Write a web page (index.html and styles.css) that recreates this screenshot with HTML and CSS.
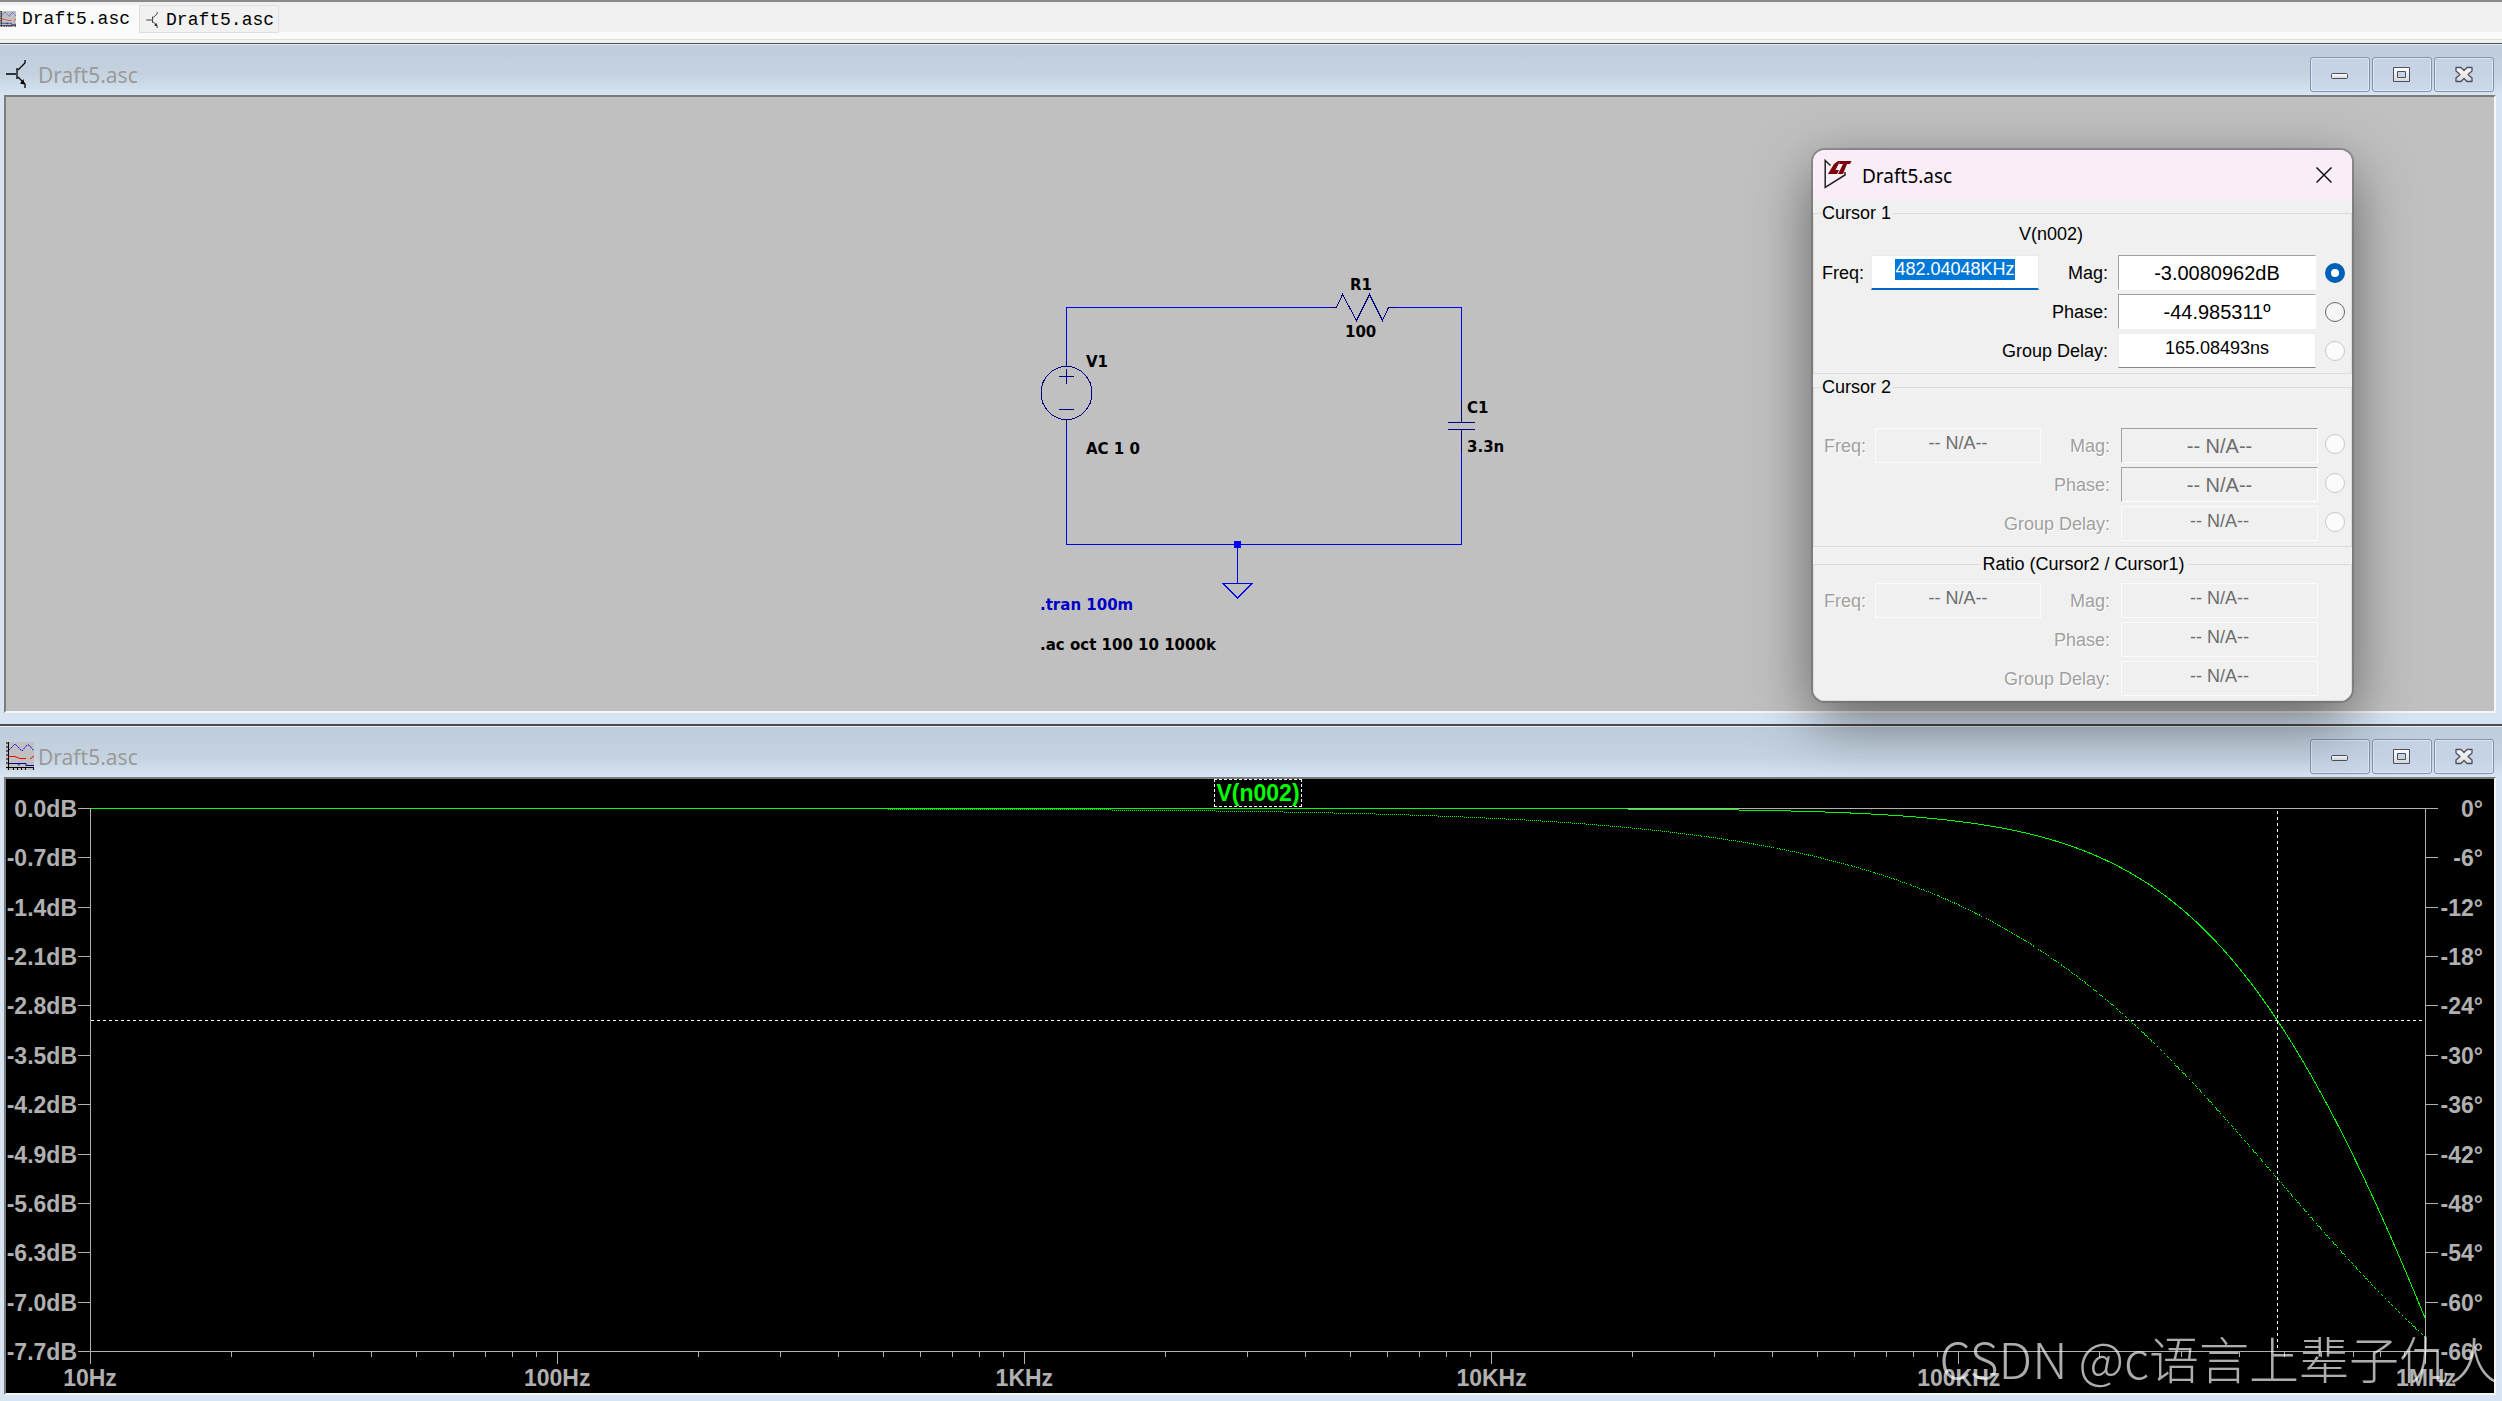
FILE: index.html
```html
<!DOCTYPE html>
<html lang="en">
<head>
<meta charset="utf-8">
<title>Draft5.asc</title>
<link rel="stylesheet" href="styles.css">
</head>
<body>
<svg class="defs" width="0" height="0" aria-hidden="true">
  <defs>
    <linearGradient id="glyph" x1="0" y1="0" x2="0" y2="1"><stop offset="0" stop-color="#fff"/><stop offset="1" stop-color="#d8d8d8"/></linearGradient>
    <symbol id="i-plot" viewBox="0 0 28 28">
      <path d="M0 0h28v28H0z" fill="#c0c0c0"/>
      <path d="M0 1h3M0 5h3M0 9h3M0 13h3M0 17h3M0 21h3M2.5 0v28M0 25.5h28M7.500 25v3M11.500 25v3M15.500 25v3M19.500 25v3M27.500 25v3" fill="none" stroke="#000"/>
      <path d="M3 8l6-6 7 7 5-6h2l5 6" fill="none" stroke="#00f" stroke-dasharray="2 1"/>
      <path d="M3 14.500h6l5 2h6M24 17l4-3" fill="none" stroke="#f00"/>
      <path d="M3 21.500h10v2M12 22.500v-1h8v2h8" fill="none" stroke="#00009a"/>
    </symbol>
    <symbol id="i-bjt" viewBox="0 0 20 28">
      <path d="M0 14h10M11 8v11M12 10l7-7V0M12 17l7 7v4" fill="none" stroke="#000" stroke-width="1.300"/>
      <path d="M18.500 24.500l-4.500-1 3.500-4.500z" fill="#000"/>
    </symbol>
    <symbol id="i-min" viewBox="0 0 18 18"><rect x=".5" y="7.500" width="16" height="5" rx="1" fill="url(#glyph)" stroke="#4b5060"/></symbol>
    <symbol id="i-max" viewBox="0 0 18 18"><path d="M.5 1.500h16v14H.5zM4.500 5.500v6h8v-6z" fill="url(#glyph)" fill-rule="evenodd" stroke="#4b5060"/></symbol>
    <symbol id="i-close" viewBox="0 0 18 18"><path d="M1 1.500h5l3 3 3-3h5v3.500l-4 3.500 4 3.500v3.500h-5l-3-3-3 3H1v-3.500l4-3.500-4-3.500z" fill="url(#glyph)" stroke="#4b5060" stroke-width="1.300" stroke-linejoin="round"/></symbol>
  </defs>
</svg>

<nav class="tabs">
  <a class="tab tab-active" href="#plot"><svg class="tab-plot"><use href="#i-plot"/></svg>Draft5.asc</a>
  <a class="tab" href="#schematic"><svg class="tab-bjt"><use href="#i-bjt"/></svg>Draft5.asc</a>
</nav>

<main class="desktop">
  <section class="window window-schematic" id="schematic">
    <header class="titlebar">
      <svg class="title-icon title-bjt"><use href="#i-bjt"/></svg>
      <h2 class="title">Draft5.asc</h2>
      <div class="controls">
        <button class="control" aria-label="Minimize"><svg><use href="#i-min"/></svg></button>
        <button class="control" aria-label="Maximize"><svg><use href="#i-max"/></svg></button>
        <button class="control" aria-label="Close"><svg><use href="#i-close"/></svg></button>
      </div>
    </header>
    <div class="client client-schematic">
      <svg class="schematic" viewBox="0 0 480 380">
        <g class="wire">
          <path d="M26.500 74V20.500H290M356 20.500h65.500V113M421.500 165v92.500H26.500V137M197.500 257.500v39"/>
          <path d="M183 296.500h29l-14.500 14.500z"/>
        </g>
        <path class="node" d="M194 254h7v7h-7z"/>
        <g class="symbol">
          <ellipse cx="26.500" cy="106" rx="25.500" ry="26.500"/>
          <path d="M26.500 74v6M26.500 132v6M19 89.500h15M26.500 82v15M19 122.500h15"/>
          <path d="M290 20.500h6.500l6-13 14 26 13-26 13 26 6-13h7.500"/>
          <path d="M421.500 113v22M408 135.500h27M408 142.500h27M421.500 143v22"/>
        </g>
        <g class="label">
          <text x="310" y="3">R1</text>
          <text x="305" y="50">100</text>
          <text x="46" y="80">V1</text>
          <text x="46" y="167">AC 1 0</text>
          <text x="427" y="126">C1</text>
          <text x="427" y="165">3.3n</text>
          <text class="comment" x="0" y="323">.tran 100m</text>
          <text x="0" y="363">.ac oct 100 10 1000k</text>
        </g>
      </svg>
    </div>
  </section>

  <section class="window window-plot" id="plot">
    <header class="titlebar">
      <svg class="title-icon title-plot"><use href="#i-plot"/></svg>
      <h2 class="title">Draft5.asc</h2>
      <div class="controls">
        <button class="control" aria-label="Minimize"><svg><use href="#i-min"/></svg></button>
        <button class="control" aria-label="Maximize"><svg><use href="#i-max"/></svg></button>
        <button class="control" aria-label="Close"><svg><use href="#i-close"/></svg></button>
      </div>
    </header>
    <div class="client chart">
      <div class="trace"><span class="trace-name">V(n002)</span></div>
      <ol class="axis axis-mag">
        <li>0.0dB</li><li>-0.7dB</li><li>-1.4dB</li><li>-2.1dB</li><li>-2.8dB</li><li>-3.5dB</li>
        <li>-4.2dB</li><li>-4.9dB</li><li>-5.6dB</li><li>-6.3dB</li><li>-7.0dB</li><li>-7.7dB</li>
      </ol>
      <svg class="graph" viewBox="0 0 2336 544" preserveAspectRatio="none">
        <path class="frame" d="M.5 0v556M2335.500 0v556M-12 .5h2360M-12 543.500h2360"/>
        <path class="frame" id="ticks"/>
        <path class="curve" id="magnitude"/>
        <path class="curve curve-phase" id="phase"/>
        <path class="cursor" d="M2187.500 3v539M1 212.500h2334"/>
      </svg>
      <ol class="axis axis-phase">
        <li>0°</li><li>-6°</li><li>-12°</li><li>-18°</li><li>-24°</li><li>-30°</li>
        <li>-36°</li><li>-42°</li><li>-48°</li><li>-54°</li><li>-60°</li><li>-66°</li>
      </ol>
      <ol class="axis axis-freq">
        <li>10Hz</li><li>100Hz</li><li>1KHz</li><li>10KHz</li><li>100KHz</li><li>1MHz</li>
      </ol>
    </div>
  </section>
</main>

<form class="dialog">
  <header class="dialog-bar">
    <svg class="dialog-icon" viewBox="0 0 28 30">
      <path d="M6.500 6.500L1.200 1.500v27L21 16v-3" fill="none" stroke="#222" stroke-width="1.500"/>
      <path d="M14 2L10 5 4 15h9l2-4h-3.500L16 2zM16 2h11.500l-1.500 3h-3l-4 10h-5l5-10h-4z" fill="#7d0008"/>
    </svg>
    <h2 class="dialog-title">Draft5.asc</h2>
    <button class="dialog-close" type="button" aria-label="Close"><svg viewBox="0 0 16 16"><path d="M.5.5l15 15M15.500.5l-15 15" stroke="#111" stroke-width="1.500"/></svg></button>
  </header>
  <fieldset class="group group-live">
    <legend>Cursor 1</legend>
    <p class="signal">V(n002)</p>
    <div class="fields">
      <label for="f1">Freq:</label><input class="field field-freq" id="f1" value="482.04048KHz">
      <label class="right" for="m1">Mag:</label><input class="field field-big" id="m1" value="-3.0080962dB" readonly>
      <input class="radio" type="radio" name="c" aria-label="Mag 1" checked>
      <label class="wide" for="p1">Phase:</label><input class="field field-big" id="p1" value="-44.985311º" readonly>
      <input class="radio" type="radio" name="c" aria-label="Phase 1">
      <label class="wide" for="g1">Group Delay:</label><input class="field field-delay" id="g1" value="165.08493ns" readonly>
      <input class="radio" type="radio" name="c" aria-label="Group delay 1" disabled>
    </div>
  </fieldset>
  <fieldset class="group group-off">
    <legend>Cursor 2</legend>
    <p class="signal"></p>
    <div class="fields">
      <label for="f2">Freq:</label><input class="field" id="f2" value="-- N/A--" disabled>
      <label class="right" for="m2">Mag:</label><input class="field field-big" id="m2" value="-- N/A--" disabled>
      <input class="radio" type="radio" name="c" aria-label="Mag 2" disabled>
      <label class="wide" for="p2">Phase:</label><input class="field field-big" id="p2" value="-- N/A--" disabled>
      <input class="radio" type="radio" name="c" aria-label="Phase 2" disabled>
      <label class="wide" for="g2">Group Delay:</label><input class="field" id="g2" value="-- N/A--" disabled>
      <input class="radio" type="radio" name="c" aria-label="Group delay 2" disabled>
    </div>
  </fieldset>
  <fieldset class="group group-off group-ratio">
    <legend>Ratio (Cursor2 / Cursor1)</legend>
    <div class="fields">
      <label for="f3">Freq:</label><input class="field" id="f3" value="-- N/A--" disabled>
      <label class="right" for="m3">Mag:</label><input class="field" id="m3" value="-- N/A--" disabled>
      <label class="wide" for="p3">Phase:</label><input class="field" id="p3" value="-- N/A--" disabled>
      <label class="wide" for="g3">Group Delay:</label><input class="field" id="g3" value="-- N/A--" disabled>
    </div>
  </fieldset>
</form>

<p class="watermark">CSDN @c语言上辈子仇人</p>
<script src="plot.js"></script>
</body>
</html>
```
FILE: styles.css
```css
* { box-sizing: border-box; }

body {
  margin: 0;
  min-height: 100vh;
  display: flex;
  flex-direction: column;
  position: relative;
  overflow: hidden;
  background: #d7e4f2;
  font-family: "Liberation Sans", Arial, sans-serif;
  font-size: 18px;
}

h2, p, ol { margin: 0; padding: 0; }
ol { list-style: none; }
.defs { position: absolute; }

/* document tabs */
.tabs {
  display: flex;
  align-items: flex-start;
  height: 43px;
  padding-top: 3px;
  border-top: 2px solid #8a8a8a;
  border-bottom: 3px solid #f0f0f0;
  background: linear-gradient(#f0f0f0 30px, #fafafa 30px 37px, #dedede 37px);
}
.tab {
  display: flex;
  align-items: center;
  gap: 6px;
  height: 28px;
  padding: 2px 4px 0;
  border: 1px solid #dfdfdf;
  background: #f1f1f1;
  color: #000;
  font: 18px/24px "Liberation Mono", monospace;
  text-decoration: none;
}
.tab-active { padding: 0 9px 1px 0; border: 0; background: #fafafa; }
.tab-plot { width: 16px; height: 16px; }
.tab-bjt { width: 16px; height: 16px; }

/* child windows */
.desktop { flex: 1; display: flex; flex-direction: column; }
.window {
  display: flex;
  flex-direction: column;
  border-top: 2px solid #4a4d50;
  background: #d7e4f2;
}
.window-schematic { flex: 680 1 0; border-top-width: 1px; padding-bottom: 11px; }
.window-plot { flex: 676 1 0; padding-bottom: 6px; }
.titlebar {
  display: flex;
  align-items: flex-start;
  height: 51px;
  padding: 13px 8px 3px 6px;
  border-top: 1px solid #e6eef6;
  background: linear-gradient(#bfcddb, #c5d3e1 60%, #d7e4f2);
}
.title-icon { flex: none; width: 28px; height: 28px; margin-top: 2px; }
.title-bjt { width: 20px; margin-right: 8px; }
.title { flex: 1; padding-left: 4px; color: #9a9a9a; font: 21px/34px "Noto Sans", sans-serif; }
.controls { display: flex; gap: 2px; margin-top: -1px; }
.control {
  display: grid;
  place-items: center;
  width: 60px;
  height: 35px;
  padding: 0;
  border: 1px solid #8492ad;
  border-radius: 3px;
  background: rgba(198, 212, 232, .6);
  box-shadow: inset 0 0 0 1px rgba(235, 242, 250, .6);
}
.control svg { width: 18px; height: 18px; }
.client {
  flex: 1;
  margin: 0 6px 0 4px;
  border: 2px solid;
  border-color: #7c7c7c #f6f6f6 #f6f6f6 #7c7c7c;
}

/* schematic canvas */
.client-schematic { background: #c0c0c0; position: relative; }
.schematic {
  position: absolute;
  left: 1034px;
  top: 190px;
  width: 480px;
  height: 380px;
  overflow: visible;
  shape-rendering: crispEdges;
}
.wire { fill: none; stroke: #0000f0; }
.node { fill: #00f; }
.symbol { fill: none; stroke: #000080; }
.label { font: bold 15px "DejaVu Sans", sans-serif; }
.comment { fill: #0000c8; }

/* waveform plot */
.chart {
  display: grid;
  grid-template-columns: 84px 1fr 68px;
  grid-template-rows: 29px 1fr 41px;
  background: #000;
  color: #b0b0b0;
  font: bold 23px/26px "Liberation Sans", Arial, sans-serif;
}
.trace { grid-area: 1 / 2; display: flex; justify-content: center; align-items: flex-start; }
.trace-name { padding: 0 1px; border: 1px dashed #fff; color: #0f0; }
.axis { display: flex; justify-content: space-between; white-space: nowrap; }
.axis-mag, .axis-phase { flex-direction: column; text-align: right; margin: -12px 0 -13px; }
.axis-mag { grid-area: 2 / 1; padding-right: 13px; }
.axis-phase { grid-area: 2 / 3; padding-right: 11px; }
.axis-freq { grid-area: 3 / 2; margin: 0 -60px; padding-top: 13px; }
.axis-freq li { width: 120px; text-align: center; }
.graph { grid-area: 2 / 2; width: 100%; height: 100%; overflow: visible; shape-rendering: crispEdges; }
.graph path { fill: none; vector-effect: non-scaling-stroke; }
.frame { stroke: #b0b0b0; }
.curve { stroke: #0f0; }
.curve-phase { stroke-dasharray: 1 1; }
.cursor { stroke: #fff; stroke-dasharray: 3 3; }

/* cursor read-out dialog */
.dialog {
  position: absolute;
  left: 1813px;
  top: 150px;
  width: 539px;
  overflow: hidden;
  border-radius: 12px;
  background: #f0f0f0;
  box-shadow: 0 0 0 2px rgba(110, 110, 110, .6), 0 20px 60px rgba(0, 0, 0, .5);
}
.dialog-bar {
  display: flex;
  align-items: center;
  height: 50px;
  margin-bottom: 3px;
  padding: 0 20px 0 11px;
  background: #f9eef8;
}
.dialog-icon { width: 28px; height: 30px; margin-bottom: 2px; }
.dialog-title { flex: 1; padding: 1px 0 0 10px; font: 19px/28px "Noto Sans", sans-serif; }
.dialog-close { padding: 0; border: 0; background: none; }
.dialog-close svg { display: block; width: 16px; height: 16px; }
.group {
  min-width: 0;
  margin: 0 0 3px;
  padding: 0 6px 5px 8px;
  border: 1px solid #dcdcdc;
  line-height: 20px;
}
.group legend { padding: 0 2px 0 0; }
.group-ratio { margin: 7px 0 0; padding-bottom: 4px; }
.group-ratio legend { margin: 0 auto; padding: 0 3px; }
.signal { height: 32px; padding: 1px 0 0 197px; }
.group-off .signal { height: 31px; }
.group-ratio .fields { margin-top: 9px; }
.fields {
  display: grid;
  grid-template-columns: 49px 168px 69px 10px 198px 9px 20px;
  grid-auto-rows: 35px;
  row-gap: 4px;
  align-items: center;
}
.fields label { grid-column: 1; padding-top: 1px; white-space: nowrap; }
.fields .right { grid-column: 3; text-align: right; }
.fields .wide { grid-column: 1 / 4; text-align: right; }
.field {
  grid-column: 5;
  width: 100%;
  min-width: 0;
  height: 35px;
  padding: 0 0 5px;
  border: 1px solid #fbfbfb;
  border-radius: 0;
  background: #fff;
  color: #000;
  font: 18px/24px "Liberation Sans", Arial, sans-serif;
  text-align: center;
}
label + #f1, label + #f2, label + #f3 { grid-column: 2; }
.field:focus { outline: 0; }
.field::selection { background: #0078d7; color: #fff; }
.field-freq { border-color: #ececec; border-bottom: 2px solid #0067c0; }
.field-delay { border-color: #ececec; border-bottom-color: #868686; }
.field-big { padding: 2px 0 0; border-color: #a0a0a0 #fff #fff #a0a0a0; font-size: 20px; }
.field:disabled { background: #f0f0f0; color: #6d6d6d; }
.radio {
  grid-column: 7;
  appearance: none;
  width: 20px;
  height: 20px;
  margin: 0;
  border: 1px solid #666;
  border-radius: 50%;
  background: #f6f6f6;
}
.radio:checked { border: 6px solid #005fb8; background: #fff; }
.radio:disabled { border-color: #c8c8c8; background: #fbfbfb; }
.group-off .radio { margin-bottom: 3px; }
.group-off .fields { margin-left: 2px; margin-right: -2px; grid-template-columns: 51px 166px 69px 11px 197px 7px 20px; }
.group-off label { color: #a0a0a0; text-shadow: 1px 1px #fff; }

.watermark {
  position: absolute;
  right: 3px;
  bottom: 8px;
  color: rgba(255, 255, 255, .68);
  font: 300 50px/72px "Noto Sans CJK SC", sans-serif;
  white-space: nowrap;
  pointer-events: none;
}
```
FILE: plot.js
```js
// First-order RC low-pass: R = 100 ohm, C = 3.3 nF, swept 10 Hz to 1 MHz.
const W = 2335, H = 543, DECADES = 5;
const cutoff = 1 / (2 * Math.PI * 100 * 3.3e-9);
const mag = [], phase = [];
for (let x = 0; x <= W; x += 1) {
  const r = 10 ** (1 + x / W * DECADES) / cutoff;
  const db = 10 * Math.log10(1 + r * r);
  const deg = Math.atan(r) * 180 / Math.PI;
  mag.push(`${x + 0.5} ${(db / 7.7 * H + 0.5).toFixed(2)}`);
  phase.push(`${x + 0.5} ${(deg / 66 * H + 0.5).toFixed(2)}`);
}
document.getElementById('magnitude').setAttribute('d', 'M' + mag.join('L'));
document.getElementById('phase').setAttribute('d', 'M' + phase.join('L'));

let ticks = '';
for (let i = 1; i < 11; i++) {
  const y = Math.round(i * H / 11) + 0.5;
  ticks += `M-12 ${y}h12M${W + 1} ${y}h12`;
}
for (let d = 0; d < DECADES; d++) {
  for (let n = 1; n < 10; n++) {
    const x = Math.round((d + Math.log10(n)) * W / DECADES) + 0.5;
    ticks += `M${x} ${H}v${n === 1 ? 13 : 6}`;
  }
}
document.getElementById('ticks').setAttribute('d', ticks);

document.getElementById('f1').select();
```
